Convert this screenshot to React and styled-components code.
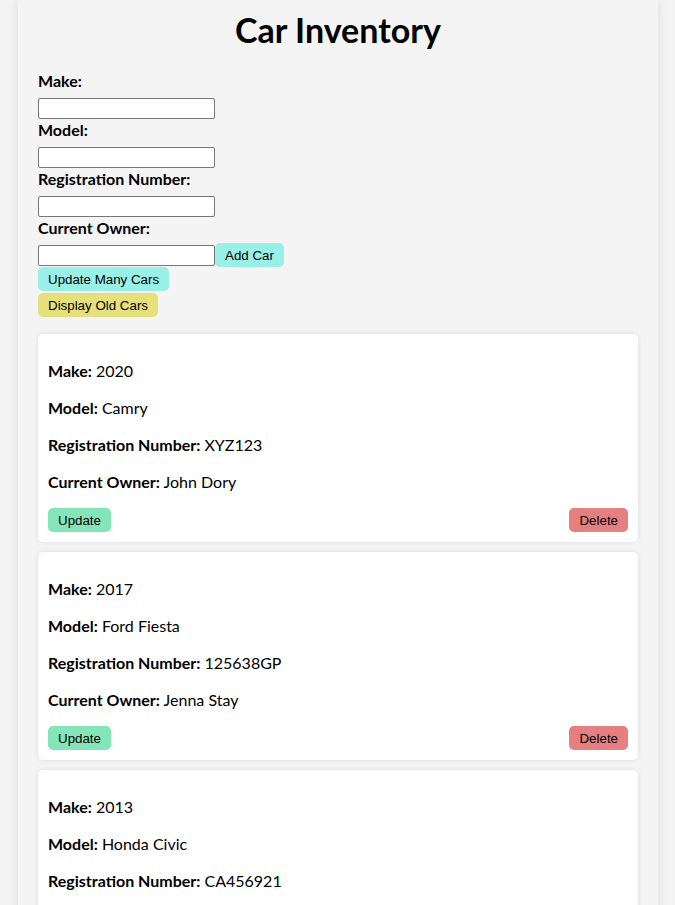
import styled, { createGlobalStyle } from 'styled-components';

const GlobalStyle = createGlobalStyle`
  body {
    margin: 0;
    padding-left: 1px;
    background: #f4f4f4;
    font-family: Lato, "Open Sans", sans-serif;
    color: #000;
  }
`;

const Container = styled.div`
  max-width: 600px;
  margin: 0 auto;
  padding: 10px 20px 20px;
  background: #f4f4f4;
  box-shadow: 0 0 10px rgba(0, 0, 0, 0.1);
`;

const Title = styled.h1`
  text-align: center;
  font-size: 34px;
  line-height: 40px;
  margin: 0 0 20px;
`;

const Label = styled.label`
  display: block;
  font-weight: 700;
  font-size: 16px;
  line-height: 22px;
  margin-bottom: 5px;
`;

const InputRow = styled.div`
  display: flex;
  align-items: center;
  height: 22px;
`;

const TextInput = styled.input`
  box-sizing: border-box;
  width: 177px;
  height: 21px;
  border: 1px solid #767676;
  border-radius: 2px;
  background: #fff;
  padding: 1px 2px;
`;

const Button = styled.button`
  box-sizing: border-box;
  height: 24px;
  padding: 0 10px;
  border: none;
  border-radius: 5px;
  font-family: "Liberation Sans", Arial, sans-serif;
  font-size: 13.33px;
  color: #000;
  background: ${p => p.color};
  cursor: pointer;
`;

const ButtonStack = styled.div`
  display: flex;
  flex-direction: column;
  align-items: flex-start;
  gap: 2px;
  margin-top: 1px;
`;

const CarList = styled.div`
  margin-top: 17px;
`;

const Card = styled.div`
  background: #fff;
  border-radius: 5px;
  padding: 10px;
  margin-bottom: 10px;
  box-shadow: 0 0 5px rgba(0, 0, 0, 0.1);
`;

const Line = styled.p`
  margin: 16px 0;
  font-size: 16px;
  line-height: 21px;
`;

const Key = styled.strong`
  font-weight: 700;
`;

const CardActions = styled.div`
  display: flex;
  justify-content: space-between;
`;

const fields = ['Make:', 'Model:', 'Registration Number:', 'Current Owner:'];

const cars = [
  { make: '2020', model: 'Camry', reg: 'XYZ123', owner: 'John Dory' },
  { make: '2017', model: 'Ford Fiesta', reg: '125638GP', owner: 'Jenna Stay' },
  { make: '2013', model: 'Honda Civic', reg: 'CA456921', owner: 'Mike Ross' },
];

function CarCard({ car }) {
  return <Card>
    <Line><Key>Make:</Key> {car.make}</Line>
    <Line><Key>Model:</Key> {car.model}</Line>
    <Line><Key>Registration Number:</Key> {car.reg}</Line>
    <Line><Key>Current Owner:</Key> {car.owner}</Line>
    <CardActions>
      <Button color="#84e6b8">Update</Button>
      <Button color="#e57f80">Delete</Button>
    </CardActions>
  </Card>;
}

export default function App() {
  return <>
    <GlobalStyle />
    <Container>
      <Title>Car Inventory</Title>
      {fields.map((f, i) => <div key={f}>
        <Label>{f}</Label>
        <InputRow>
          <TextInput type="text" />
          {i === fields.length - 1 && <Button color="#99f0e6">Add Car</Button>}
        </InputRow>
      </div>)}
      <ButtonStack>
        <Button color="#99f0e6">Update Many Cars</Button>
        <Button color="#e6e07a">Display Old Cars</Button>
      </ButtonStack>
      <CarList>
        {cars.map(c => <CarCard key={c.reg} car={c} />)}
      </CarList>
    </Container>
  </>;
}
